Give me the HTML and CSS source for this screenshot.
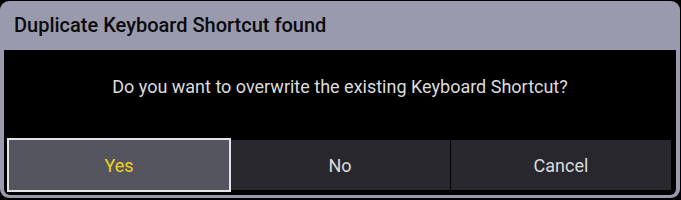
FILE: index.html
```html
<!DOCTYPE html>
<html>
<head>
<meta charset="utf-8">
<link rel="stylesheet" href="styles.css">
</head>
<body>
<div class="dialog">
  <div class="title">Duplicate Keyboard Shortcut found</div>
  <div class="content">
    <div class="message">Do you want to overwrite the existing Keyboard Shortcut?</div>
    <div class="buttons">
      <div class="btn btn-active">Yes</div>
      <div class="btn">No</div>
      <div class="btn">Cancel</div>
    </div>
  </div>
</div>
</body>
</html>
```

FILE: styles.css
```css
html, body {
  margin: 0;
  padding: 0;
  background: #000;
}
body {
  width: 681px;
  height: 200px;
  overflow: hidden;
  font-family: Roboto, "Liberation Sans", sans-serif;
}
.dialog {
  margin-top: 1px;
  width: 680px;
  height: 197px;
  box-sizing: border-box;
  background: #9a9aae;
  border-radius: 9px;
  padding: 0 4px 3px 4px;
  display: flex;
  flex-direction: column;
}
.title {
  height: 49px;
  display: flex;
  align-items: center;
  padding-left: 10px;
  padding-bottom: 1px;
  box-sizing: border-box;
  font-size: 20px;
  font-weight: 500;
  color: #0a0a0c;
}
.content {
  flex: 1;
  background: #000;
  border-radius: 0 0 6px 6px;
  display: flex;
  flex-direction: column;
  padding: 0 5px 4px 5px;
}
.message {
  padding-top: 26px;
  line-height: 22px;
  height: 22px;
  text-align: center;
  color: #dcdcdc;
  font-size: 18px;
}
.buttons {
  margin-top: 42px;
  display: flex;
  gap: 1px;
  height: 50px;
}
.btn {
  flex: 1;
  background: #28272d;
  color: #dcdcdc;
  font-size: 18px;
  display: flex;
  align-items: center;
  justify-content: center;
}
.btn-active {
  background: #55555f;
  color: #f0d21e;
  outline: 2px solid #e4e4e8;
  position: relative;
  z-index: 1;
}
```
